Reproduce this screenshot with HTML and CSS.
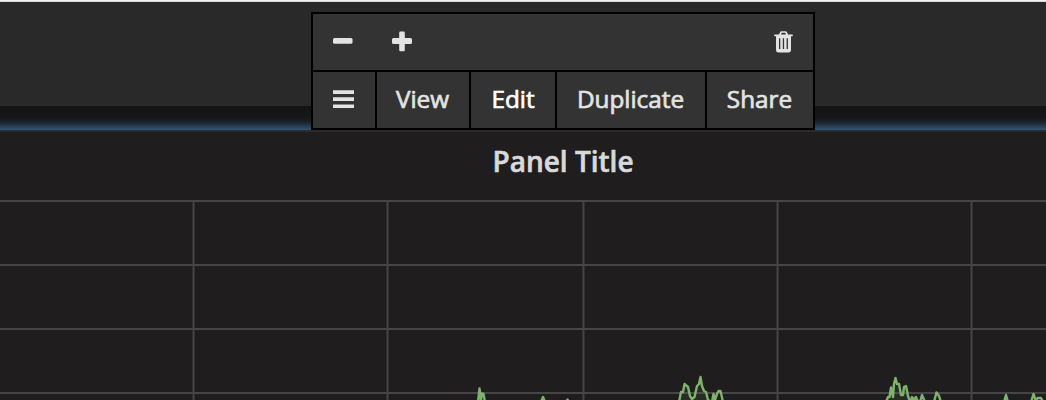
FILE: index.html
```html
<!DOCTYPE html>
<html lang="en">
<head>
<meta charset="utf-8">
<title>Panel Title</title>
<link rel="stylesheet" href="styles.css">
</head>
<body>
<div class="dashboard">
  <div class="topline"></div>
  <div class="row-bar"></div>
  <div class="glow"></div>
  <section class="panel">
    <h1 class="panel-title"><span>Panel Title</span></h1>
    <svg class="graph" width="1046" height="204" viewBox="0 196 1046 204">
      <g class="grid">
        <path d="M0 201H1046M0 265H1046M0 329H1046M0 393H1046"/>
        <path d="M193.500 200V400M387.500 200V400M583.500 200V400M777.500 200V400M971.500 200V400"/>
      </g>
      <g class="area">
        <path d="M679 400L681 393H683L685 384L688 387L691 398L694 398L697 385L700 377L704 390L708 400Z"/>
        <path d="M887 400L891 387L895 379L898 384L902 396L905 386L908 400Z"/>
      </g>
      <g class="series">
        <path d="M478 402L479.500 388.500L481 400L482 393.500L483.500 394L485 402"/>
        <path d="M541 402L543 397L545 402M566 402L567.500 399.500L569 402"/>
        <path d="M679 402L681 392H683L684.500 384L688 387L690 396L692 399L694.500 397L697 386L699 384L700.500 377L702 386L704 391L706 392L708 400L712 402L713.500 394L715 400L717 394L718.500 391L720.500 391L723 402"/>
        <path d="M886 402L888 397H889.500L891 387.500L893 397L894 384L895.500 378L897 384H899L901 395L903 395L904 387L906 386L908 396L910 402L912 397L914 400L916 397L918 402M920 402L922 395L925 402M934 402L936.500 392.500L939 396L941 402"/>
        <path d="M1004 402L1006 395L1008 402M1031 402L1033.500 394L1035.500 400L1038 398L1041 398L1043 402"/>
      </g>
    </svg>
  </section>
  <nav class="panel-menu">
    <div class="menu-row tools">
      <svg class="sizing" width="81" height="24" viewBox="0 0 81 24">
        <rect x="0" y="9" width="19.500" height="5.800" rx="1.500"/>
        <path d="M66.500 2.500h4a1.300 1.300 0 0 1 1.300 1.300V9h5.700a1.500 1.500 0 0 1 1.500 1.500v3a1.500 1.500 0 0 1-1.500 1.500h-5.700v6a1.300 1.300 0 0 1-1.300 1.300h-3a1.300 1.300 0 0 1-1.300-1.300v-6h-5.700a1.500 1.500 0 0 1-1.500-1.500v-3a1.500 1.500 0 0 1 1.500-1.500h5.700V3.800a1.300 1.300 0 0 1 1.300-1.300z"/>
      </svg>
      <svg class="trash" width="19" height="22" viewBox="0 0 19 22">
        <path fill-rule="evenodd" d="M5 3.500 6 1.200Q6.400.2 7.500.2h4q1.100 0 1.500 1L14 3.500h4.300q.5 0 .5.500v.8q0 .5-.5.500H17v13.500Q17 21.500 14.500 21.500h-10Q2 21.500 2 18.800V5.300H.7q-.5 0-.5-.5V4q0-.5.500-.5zM7 3.500h5l-.6-1.500q-.1-.3-.4-.3H8q-.3 0-.4.300zM5 7.200V18h1.300V7.200zM8.800 7.200V18h1.300V7.200zM12.600 7.200V18h1.300V7.200z"/>
      </svg>
    </div>
    <div class="menu-row actions">
      <span class="item handle"><svg width="21" height="20" viewBox="0 0 21 20"><path d="M0 1.300h21v3.600H0zM0 8.300h21v3.600H0zM0 15.400h21v3.600H0z"/></svg></span>
      <span class="item">View</span>
      <span class="item active">Edit</span>
      <span class="item">Duplicate</span>
      <span class="item">Share</span>
    </div>
  </nav>
</div>
</body>
</html>
```
FILE: styles.css
```css
body {
  margin: 0;
  background: #1f1d1e;
  font-family: "Open Sans", "Noto Sans", sans-serif;
}
.dashboard {
  position: relative;
  width: 1046px;
  height: 400px;
  overflow: hidden;
}
.topline {
  height: 2px;
  background: linear-gradient(#f2f4f5 50%, #d7dadb 50%);
}
.row-bar {
  height: 104px;
  background: #292929;
}
.glow {
  height: 24px;
  background: linear-gradient(#141414 0%, #151616 45%, #192027 65%, #243b4e 83%, #31597b 100%);
}
.panel {
  height: 268px;
  border-top: 2px solid #2b2b2b;
  background: #1f1d1e;
}
.panel-title {
  box-sizing: border-box;
  height: 64px;
  margin: 0;
  padding-left: 80px;
  display: flex;
  justify-content: center;
  color: #d8d9da;
  font-size: 28px;
  font-weight: 600;
  line-height: 58px;
  -webkit-text-stroke: .6px currentColor;
}
.graph { display: block; }
.grid { fill: none; stroke: #474647; stroke-width: 2; }
.area { fill: #7eb26d; opacity: .1; }
.series { fill: none; stroke: #7eb26d; stroke-width: 2.4; stroke-linejoin: round; }
.panel-menu {
  position: absolute;
  top: 12px;
  left: 311px;
  box-sizing: border-box;
  width: 504px;
  height: 118px;
  border: 2px solid #000;
  background: #333;
  color: #e3e3e3;
  fill: #e3e3e3;
}
.menu-row { display: flex; }
.tools {
  box-sizing: border-box;
  height: 58px;
  padding: 0 20px;
  align-items: center;
  justify-content: space-between;
  border-bottom: 2px solid #000;
}
.sizing { margin-bottom: 2px; }
.trash { margin-bottom: 0; }
.actions {
  display: grid;
  grid-template-columns: 64px 94px 86px 150px 106px;
  height: 56px;
}
.item {
  display: flex;
  box-sizing: border-box;
  align-items: center;
  justify-content: center;
  border-right: 2px solid #000;
  font-size: 24.3px;
  line-height: 54px;
  padding-right: 1px;
  padding-bottom: 2px;
  -webkit-text-stroke: .7px currentColor;
}
.handle {
  justify-content: flex-start;
  padding-left: 20px;
}
.item:last-child { border-right: 0; }
.active { padding-right: 0; color: #fff; }
```
